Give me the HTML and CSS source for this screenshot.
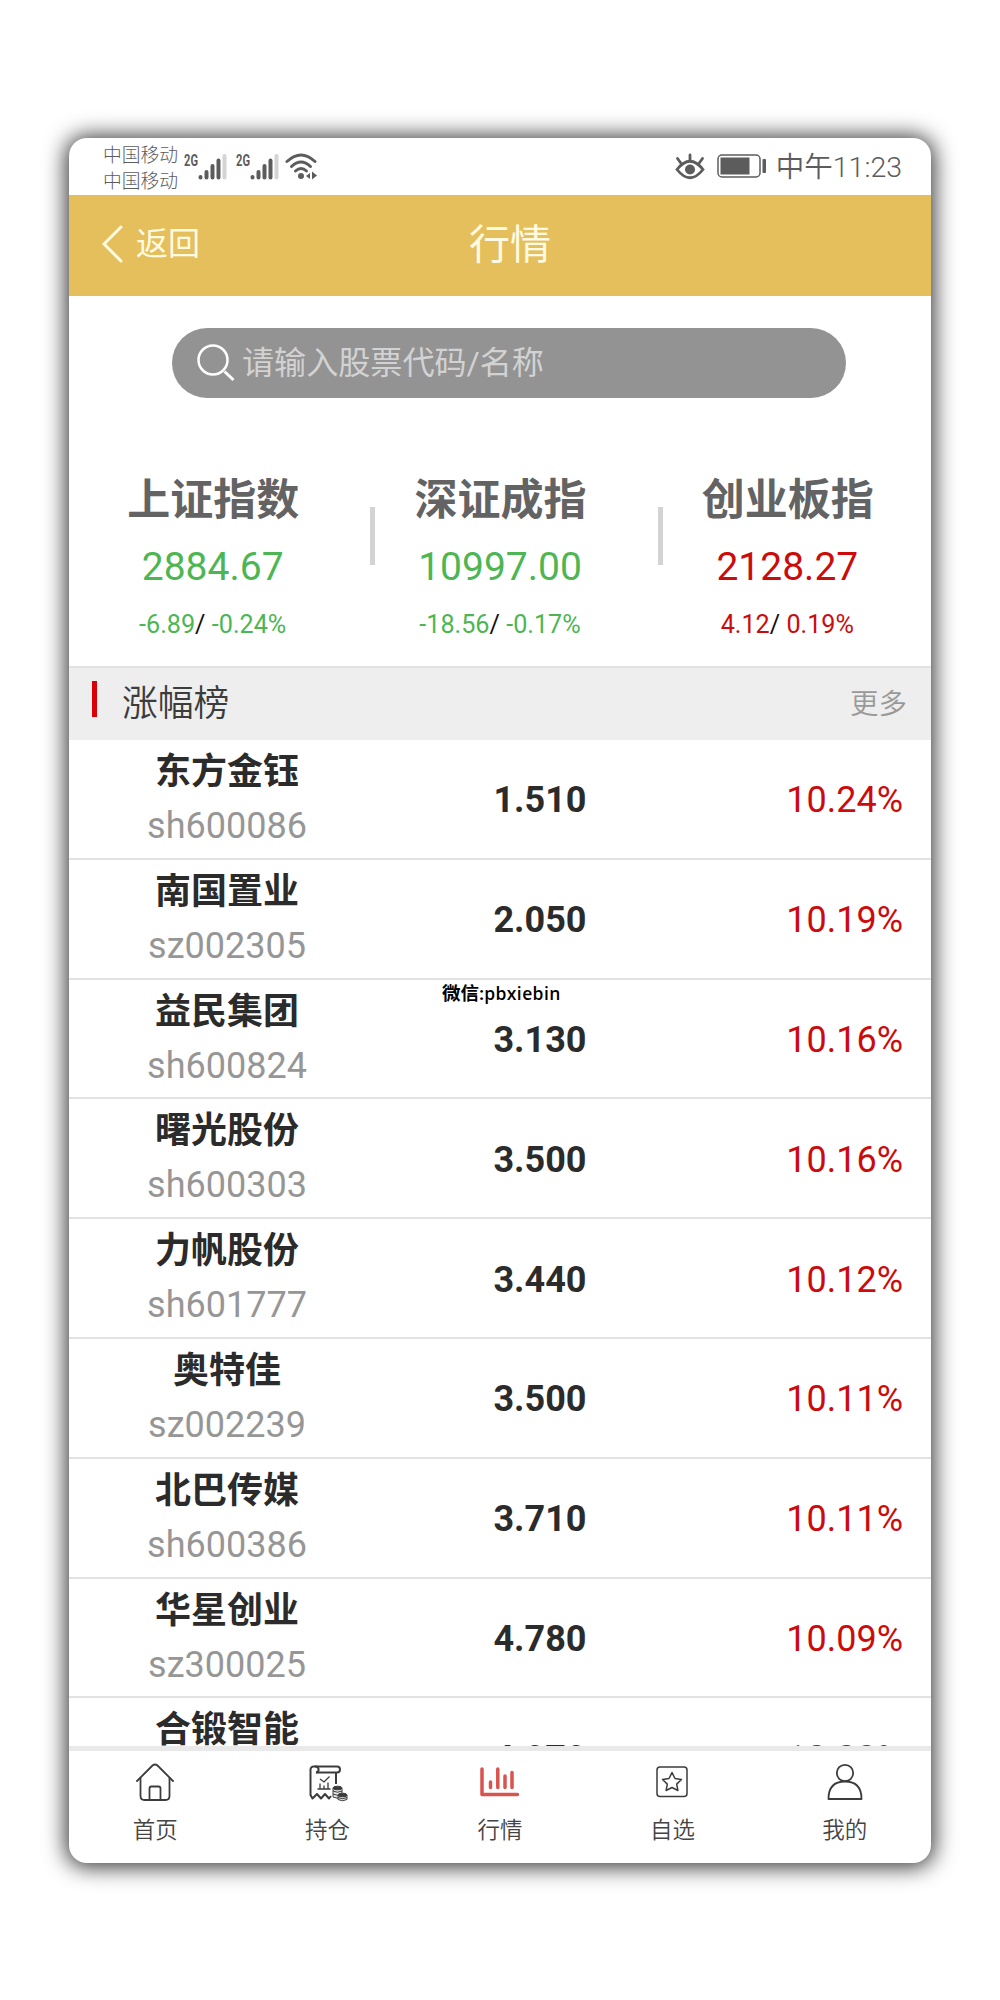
FILE: index.html
```html
<!DOCTYPE html>
<html lang="zh-CN">
<head>
  <meta charset="UTF-8">
  <title>行情</title>
  <link rel="stylesheet" href="styles.css">
</head>
<body>

  <div class="phone">
    <!-- Status bar -->
    <div class="status">
      <div class="carrier">
        <span>中国移动</span>
        <span>中国移动</span>
      </div>
      <svg class="signal" width="43" height="30" viewBox="0 0 43 30">
        <text x="0" y="13.500" textLength="14" lengthAdjust="spacingAndGlyphs">2G</text>
        <g stroke="#5c5c5c" stroke-width="4" stroke-linecap="round">
          <path d="M16.500 25v.5M22.500 20v5.500M28.500 14v11.500M34.500 8.500v17"/>
          <path d="M40.500 4v21.500" stroke="#d4d4d4"/>
        </g>
      </svg>
      <svg class="signal" width="43" height="30" viewBox="0 0 43 30">
        <text x="0" y="13.500" textLength="14" lengthAdjust="spacingAndGlyphs">2G</text>
        <g stroke="#5c5c5c" stroke-width="4" stroke-linecap="round">
          <path d="M16.500 25v.5M22.500 20v5.500M28.500 14v11.500M34.500 8.500v17"/>
          <path d="M40.500 4v21.500" stroke="#d4d4d4"/>
        </g>
      </svg>
      <svg class="wifi" width="34" height="30" viewBox="0 0 34 30">
        <g fill="none" stroke="#5c5c5c" stroke-width="3" stroke-linecap="round">
          <path d="M2 9.500Q16 -3.500 30 9.500"/>
          <path d="M6.500 14.500Q16 5.500 25.500 14.500"/>
          <path d="M10.500 19Q16 14 21.500 19"/>
        </g>
        <circle cx="16" cy="24" r="3" fill="#5c5c5c"/>
        <path d="M21 24l4-3v6zM27 19.500l5 4-5 4z" fill="#5c5c5c"/>
      </svg>
      <div class="status-right">
        <svg width="30" height="28" viewBox="0 0 30 28">
          <g fill="none" stroke="#5c5c5c" stroke-width="2.800" stroke-linecap="round">
            <path d="M2 16.500Q15 0 28 16.500Q15 33 2 16.500z"/>
            <path d="M15 2v5M2.500 5.500l4 5.500M27.500 5.500l-4 5.500"/>
          </g>
          <circle cx="15" cy="16.500" r="5" fill="#5c5c5c"/>
        </svg>
        <svg class="battery" width="50" height="25" viewBox="0 0 50 25">
          <rect x="1" y="1" width="42" height="22" rx="4" fill="none" stroke="#5c5c5c" stroke-width="1.500"/>
          <rect x="3.500" y="3.500" width="29" height="17" fill="#5c5c5c"/>
          <rect x="45.500" y="5" width="3.500" height="14" rx="1" fill="#5c5c5c"/>
        </svg>
        <span class="time">中午11:23</span>
      </div>
    </div>

    <!-- Header -->
    <div class="header">
      <div class="back">
        <svg width="21" height="38" viewBox="0 0 21 38">
          <path d="M19 2L2 19l17 17" fill="none" stroke="#fffbe2" stroke-width="3" stroke-linecap="round"/>
        </svg>
        <span>返回</span>
      </div>
      <h1>行情</h1>
    </div>

    <div class="search">
      <svg width="38" height="38" viewBox="0 0 38 38">
        <circle cx="16" cy="16" r="14.500" fill="none" stroke="#fff" stroke-width="2.500"/>
        <path d="M27.500 27.500l9 8.500" stroke="#fff" stroke-width="3"/>
      </svg>
      <span>请输入股票代码/名称</span>
    </div>

    <!-- Index numbers -->
    <div class="indexes">
      <div class="index green">
        <h2>上证指数</h2>
        <p class="value">2884.67</p>
        <p class="change">-6.89<i>/</i> -0.24%</p>
      </div>
      <div class="index green">
        <h2>深证成指</h2>
        <p class="value">10997.00</p>
        <p class="change">-18.56<i>/</i> -0.17%</p>
      </div>
      <div class="index red">
        <h2>创业板指</h2>
        <p class="value">2128.27</p>
        <p class="change">4.12<i>/</i> 0.19%</p>
      </div>
    </div>

    <div class="list-title">
      <span class="mark"></span>
      <h3>涨幅榜</h3>
      <a class="more">更多</a>
    </div>

    <!-- Stocks -->
    <div class="list">
      <div class="row">
        <div class="stock"><b>东方金钰</b><span>sh600086</span></div>
        <div class="price">1.510</div>
        <div class="percent">10.24%</div>
      </div>
      <div class="row">
        <div class="stock"><b>南国置业</b><span>sz002305</span></div>
        <div class="price">2.050</div>
        <div class="percent">10.19%</div>
      </div>
      <div class="row">
        <div class="stock"><b>益民集团</b><span>sh600824</span></div>
        <div class="price">3.130</div>
        <div class="percent">10.16%</div>
        <div class="contact">微信:<span>pbxiebin</span></div>
      </div>
      <div class="row">
        <div class="stock"><b>曙光股份</b><span>sh600303</span></div>
        <div class="price">3.500</div>
        <div class="percent">10.16%</div>
      </div>
      <div class="row">
        <div class="stock"><b>力帆股份</b><span>sh601777</span></div>
        <div class="price">3.440</div>
        <div class="percent">10.12%</div>
      </div>
      <div class="row">
        <div class="stock"><b>奥特佳</b><span>sz002239</span></div>
        <div class="price">3.500</div>
        <div class="percent">10.11%</div>
      </div>
      <div class="row">
        <div class="stock"><b>北巴传媒</b><span>sh600386</span></div>
        <div class="price">3.710</div>
        <div class="percent">10.11%</div>
      </div>
      <div class="row">
        <div class="stock"><b>华星创业</b><span>sz300025</span></div>
        <div class="price">4.780</div>
        <div class="percent">10.09%</div>
      </div>
      <div class="row">
        <div class="stock"><b>合锻智能</b></div>
        <div class="price">4.070</div>
        <div class="percent">10.08%</div>
      </div>
    </div>

    <!-- Tab bar -->
    <div class="tabs">
      <div class="tab">
        <svg width="40" height="40" viewBox="0 0 40 40">
          <g fill="none" stroke="#3c3c3c" stroke-width="1.800" stroke-linecap="round" stroke-linejoin="round">
            <path d="M2 19L17.500 3.500q2.500-2 5 0L38 19"/>
            <path d="M5.500 16v18q0 4 4 4h21q4 0 4-4V16"/>
            <path d="M14.500 38V26.500q0-2 2-2h7q2 0 2 2V38"/>
          </g>
        </svg>
        <span>首页</span>
      </div>
      <div class="tab">
        <svg width="40" height="40" viewBox="0 0 40 40">
          <g fill="none" stroke="#3c3c3c" stroke-width="2" stroke-linejoin="round">
            <path d="M8 10.500h21a3 3 0 0 0 0-6H5.500a3 3 0 0 0-3 3V33l2 3.500 4.500-4.500 4 4.500 4-4.500 4 4.500 2-2.500"/>
            <path d="M8 10.500a3 3 0 1 0-1-6M28 10.500V22"/>
          </g>
          <path d="M9.500 27h13M12 26.500v-5M16 26.500v-3M20 26.500v-6M12 17l4 3 5.500-5.500" fill="none" stroke="#3c3c3c" stroke-width="1.300"/>
          <g fill="#e4e4e4" stroke="#3c3c3c" stroke-width="1">
            <path d="M25 26v9q4.500 2.500 9 0v-9M25 29q4.500 2.500 9 0M25 32q4.500 2.500 9 0"/>
            <ellipse cx="29.500" cy="26" rx="4.500" ry="1.800" fill="#3c3c3c"/>
            <path d="M30 33v4.500q4.500 2.500 9 0V33M30 35.500q4.500 2.500 9 0"/>
            <ellipse cx="34.500" cy="33" rx="4.500" ry="1.800" fill="#3c3c3c"/>
          </g>
        </svg>
        <span>持仓</span>
      </div>
      <div class="tab">
        <svg width="40" height="40" viewBox="0 0 40 40">
          <path d="M2 7v25.500h35.500M10.500 20v5.500M17.800 7v18.500M25 14v11.500M32 10.500v15" fill="none" stroke="#d9534f" stroke-width="3.500" stroke-linecap="round" stroke-linejoin="round"/>
        </svg>
        <span>行情</span>
      </div>
      <div class="tab">
        <svg width="40" height="40" viewBox="0 0 40 40">
          <g fill="none" stroke="#3c3c3c" stroke-width="1.500" stroke-linejoin="round">
            <rect x="5" y="5" width="30" height="29.500" rx="3"/>
            <path d="M20 10.500l3 6 6.500 1-4.800 4.600 1.200 6.400-5.900-3-5.900 3 1.200-6.400-4.800-4.600 6.500-1z"/>
          </g>
        </svg>
        <span>自选</span>
      </div>
      <div class="tab">
        <svg width="40" height="40" viewBox="0 0 40 40">
          <g fill="none" stroke="#3c3c3c" stroke-width="1.800" stroke-linejoin="round">
            <circle cx="20" cy="11" r="8.200"/>
            <path d="M3.500 37q0-17.500 16.500-17.500T36.500 37z"/>
          </g>
        </svg>
        <span>我的</span>
      </div>
    </div>
  </div>

</body>
</html>
```
FILE: styles.css
```css
* {
  box-sizing: border-box;
}

body {
  margin: 0;
  height: 2000px;
  padding: 138px 69px;
  background: #fff;
  font-family: Roboto, "Noto Sans CJK SC", sans-serif;
  overflow: hidden;
}

h1, h2, h3, p {
  margin: 0;
}

.phone {
  display: flex;
  flex-direction: column;
  width: 862px;
  height: 1724.5px;
  background: #fff;
  border-radius: 18px;
  box-shadow: 0 1px 22px 3px rgba(0, 0, 0, 0.8);
  overflow: hidden;
}

/* status bar */
.status {
  display: flex;
  align-items: center;
  flex: none;
  height: 57px;
  padding: 0 29px 0 34px;
  color: #5c5c5c;
}

.carrier {
  display: flex;
  flex-direction: column;
  width: 76px;
  margin-right: 5px;
  padding-top: 4px;
  font-size: 18.8px;
  font-weight: 300;
  line-height: 26px;
}

.signal {
  margin-right: 9px;
}

.wifi {
  margin-left: -3px;
}

.signal text {
  font-size: 16px;
  font-weight: 700;
  fill: #5c5c5c;
}

.status-right {
  display: flex;
  align-items: center;
  margin-left: auto;
}

.battery {
  margin: 0 9px 0 12px;
}

.time {
  padding-top: 2px;
  font-size: 28.5px;
  font-weight: 350;
  line-height: 55px;
}

/* header */
.header {
  display: grid;
  grid-template-columns: 1fr auto 1fr;
  align-items: center;
  flex: none;
  height: 101px;
  padding: 0 33px 3px;
  background: #e6bf5d;
  color: #fffbe2;
}

.back {
  display: flex;
  align-items: center;
  gap: 13px;
  font-size: 32px;
  line-height: 44px;
}

.header h1 {
  margin: -7px 0 0 20px;
  font-size: 41px;
  font-weight: 400;
}

/* search */
.search {
  display: flex;
  align-items: center;
  flex: none;
  gap: 7px;
  width: 674px;
  height: 70px;
  margin: 32px 0 0 103px;
  padding-left: 25px;
  border-radius: 35px;
  background: #939393;
  color: #d2d2d2;
  font-size: 32.1px;
  line-height: 66px;
}

/* indexes */
.indexes {
  display: flex;
  flex: none;
  height: 268px;
  padding-top: 70px;
}

.index {
  position: relative;
  flex: 1;
  text-align: center;
}

/* divider between two columns */
.index + .index::before {
  content: "";
  position: absolute;
  left: 14px;
  top: 39px;
  width: 5px;
  height: 58px;
  background: #d3d3d3;
}

.index h2 {
  padding-left: 1px;
  color: #636363;
  font-size: 43px;
  line-height: 64px;
}

.value {
  margin-top: 9px;
  font-size: 39px;
  line-height: 52px;
}

.change {
  margin-top: 17px;
  font-size: 25.2px;
  line-height: 30px;
}

.change i {
  color: #111;
  font-style: normal;
}

.green {
  color: #4db653;
}

.red {
  color: #cc0c0c;
}

/* list title */
.list-title {
  display: flex;
  flex: none;
  height: 74px;
  padding: 0 24px 0 23px;
  background: #eee;
  border-top: 2px solid #e2e2e2;
}

.mark {
  width: 5px;
  height: 36px;
  margin: 13px 25px 0 0;
  background: #d90008;
}

.list-title h3 {
  color: #3c3c3c;
  font-size: 35.8px;
  font-weight: 350;
  line-height: 73px;
}

.more {
  margin-left: auto;
  color: #999;
  font-size: 28.5px;
  font-weight: 350;
  line-height: 74px;
}

/* list */
.list {
  flex: 1;
  min-height: 0;
  overflow: hidden;
}

.row {
  position: relative;
  display: flex;
  align-items: center;
  height: 119.8px;
  padding: 3px 28px 0 0;
  border-bottom: 2px solid #e2e2e2;
  font-size: 36px;
}

.stock {
  display: flex;
  flex-direction: column;
  align-self: flex-start;
  width: 316px;
  padding-top: 2px;
  line-height: 54px;
  text-align: center;
}

.stock b {
  color: #2b2b2b;
}

.stock span {
  color: #969696;
}

.price {
  width: 310px;
  color: #2b2b2b;
  font-weight: 700;
  text-align: center;
}

.percent {
  margin-left: auto;
  color: #cc0c0c;
}

.contact {
  position: absolute;
  left: 373px;
  top: 1px;
  color: #000;
  font-size: 18.5px;
  font-weight: 700;
  line-height: 24px;
}

.contact span {
  font-family: "Open Sans", sans-serif;
  font-size: 17.5px;
  font-weight: 600;
  letter-spacing: 0.4px;
}

/* tab bar */
.tabs {
  display: flex;
  flex: none;
  height: 117px;
  border-top: 5px solid #e9e9e9;
}

.tab {
  display: flex;
  flex: 1;
  flex-direction: column;
  align-items: center;
  padding-top: 11px;
  color: #444;
  font-size: 22.5px;
  font-weight: 350;
}

.tab span {
  margin-top: 11px;
  line-height: 34px;
}
```
